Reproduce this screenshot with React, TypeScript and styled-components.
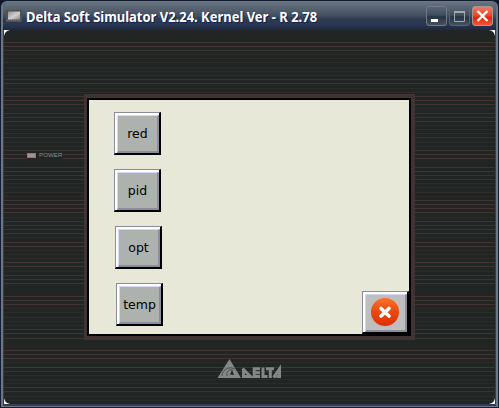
import React from "react";
import styled, { createGlobalStyle } from "styled-components";

const GlobalStyle = createGlobalStyle`
  * { box-sizing: border-box; }
  body { margin: 0; background: #10172b; overflow: hidden; }
`;

const Window = styled.main`
  width: 499px;
  height: 408px;
  display: flex;
  flex-direction: column;
  padding: 1px;
  border-radius: 7px 7px 0 0;
  background: #141d30;
  font-family: "Noto Sans", "Open Sans", sans-serif;
`;

const Frame = styled.div`
  flex: 1;
  display: flex;
  flex-direction: column;
  border: 1px solid #6d7784;
  border-width: 1px 2px 1px 2px;
  border-radius: 6px 6px 0 0;
  background: #2f3d57;
  padding: 0 1px 2px 1px;
  overflow: hidden;
`;

const TitleBar = styled.header`
  height: 28px;
  margin: 0 -1px;
  padding: 0 3px 0 3px;
  display: flex;
  align-items: center;
  background: linear-gradient(#68747f 0, #5b6775 5px, #414e5e 14px, #2e3b53 17px, #293650 23px, #1d2743 28px);
`;

const Title = styled.h1`
  flex: 1;
  margin: 0 0 0 4px;
  padding-top: 2px;
  color: #fff;
  font-size: 13.6px;
  line-height: 20px;
  white-space: nowrap;
  text-shadow: 1px 1px 0 #14204f;
`;

const TitleText = styled.span`
  display: inline-block;
  transform: scaleX(0.954);
  transform-origin: left;
`;

const Controls = styled.div`
  display: flex;
  gap: 2px;
`;

const Control = styled.button<{ $tone?: "close" | "disabled" }>`
  width: 21px;
  height: 20px;
  padding: 0;
  display: grid;
  place-items: center;
  border: 1px solid ${(p) => (p.$tone === "close" ? "#a89791" : p.$tone === "disabled" ? "#586473" : "#6f7a87")};
  border-radius: 3px;
  background: ${(p) =>
    p.$tone === "close"
      ? "linear-gradient(#ed7b65, #e84b2b 45%, #df260c 60%, #f15835)"
      : "linear-gradient(#596675, #414e5d 45%, #263448 55%, #46515b)"};
`;

const Body = styled.section`
  flex: 1;
  display: flex;
  flex-direction: column;
  position: relative;
  background: #212524;
`;

const Grooves = styled.svg`
  position: absolute;
  inset: 0;
  width: 100%;
  height: 100%;
`;

const Corner = styled.svg<{ $side: "tl" | "tr" | "bl" | "br" }>`
  position: absolute;
  width: 6px;
  height: 6px;
  ${(p) => (p.$side[0] === "t" ? "top: 0;" : "bottom: 0;")}
  ${(p) => (p.$side[1] === "l" ? "left: 0;" : "right: 0;")}
  transform: scale(${(p) => (p.$side[1] === "l" ? 1 : -1)}, ${(p) => (p.$side[0] === "t" ? 1 : -1)});
`;

const Middle = styled.div`
  position: relative;
  display: flex;
  padding-top: 64px;
`;

const PowerArea = styled.div`
  width: 80px;
  padding: 57px 0 0 23px;
  display: flex;
  align-items: flex-start;
`;

const Power = styled.div`
  height: 8px;
  display: flex;
  align-items: center;
  gap: 3px;
  color: #8a8e8c;
  font: 6.2px/8px "Liberation Sans", sans-serif;
  background: #212524;
  padding-right: 1px;
`;

const Led = styled.i`
  width: 9px;
  height: 5px;
  background: #ad8f8f;
  border: 1px solid #927777;
`;

const Bezel = styled.div`
  width: 331px;
  height: 246px;
  border: 4px solid #3f3433;
  border-left-width: 3px;
`;

const Screen = styled.div`
  width: 324px;
  height: 238px;
  border: 2px solid #000;
  background: #e7e8d8;
  display: flex;
  justify-content: space-between;
`;

const Menu = styled.nav`
  display: flex;
  flex-direction: column;
  gap: 14px;
  padding: 12px 0 0 25px;
`;

const Key = styled.button<{ $shift?: number; $close?: boolean }>`
  width: 47px;
  height: 43px;
  margin: 0 0 0 ${(p) => p.$shift ?? 0}px;
  padding: 0;
  border: 1px solid #8c8ca0;
  border-right: 2px solid #000;
  border-bottom: 2px solid #000;
  background: #fff;
  display: flex;
  ${(p) => p.$close && "align-self: flex-end;"}
`;

const Face = styled.span<{ $light?: boolean }>`
  flex: 1;
  align-self: stretch;
  margin: 2px 0 0 2px;
  padding: ${(p) => (p.$light ? "0 1px 1px 0" : "0")};
  border: 1px solid #d6d8fa;
  border-right: 2px solid #8c8c9f;
  border-bottom: 2px solid #8c8c9f;
  background: ${(p) => (p.$light ? "#bebebe" : "#adb2ae")};
  color: #000;
  display: flex;
  align-items: center;
  justify-content: center;
  font: 12.5px/16px "DejaVu Sans", sans-serif;

  svg { flex: none; }
`;

const Label = styled.span`
  display: block;
`;

const Brand = styled.footer`
  position: relative;
  display: flex;
  padding: 19px 0 0 213px;
`;

// Engraved lines as [y, colour], with y measured from the top of the window.
const faint = "#2b2b29";
const mid = "#373532";
const warm = "#403533";
const grooves: [number, string][] = [
  [42, warm], [46, warm], [50, mid], [54, faint], [58, faint], [62, "#302e2b"], [67, faint],
  [71, faint], [75, faint], [79, mid], [83, mid], [88, faint], [92, faint], [96, warm],
  [100, warm], [104, warm], [108, faint], [113, mid], [117, mid], [121, mid], [125, faint],
  [129, faint], [133, "#302e2b"], [137, mid], [142, faint], [146, faint], [150, mid],
  [154, warm], [158, warm], [167, mid], [171, warm], [175, mid], [179, mid], [183, faint],
  [187, faint], [192, "#302e2b"], [196, faint], [200, warm], [204, warm], [208, warm],
  [212, warm], [217, faint], [221, mid], [225, mid], [229, mid], [233, mid], [237, faint],
  [242, warm], [246, warm], [250, faint], [254, faint], [258, faint], [262, warm],
  [266, warm], [271, faint], [275, mid], [279, mid], [283, mid], [296, warm], [300, warm],
  [304, warm], [308, faint], [312, faint], [317, "#302e2b"], [321, faint], [325, faint],
  [329, mid], [333, warm], [338, mid], [350, warm], [354, warm], [358, warm], [362, faint],
  [367, warm], [371, mid], [375, faint], [379, faint], [383, faint], [387, warm],
  [391, mid], [396, faint], [400, faint],
];

const keys = [
  { label: "red", shift: 0 },
  { label: "pid", shift: 0 },
  { label: "opt", shift: 1 },
  { label: "temp", shift: 2 },
];

const sides = ["tl", "tr", "bl", "br"] as const;

function DeviceIcon() {
  return (
    <svg width="16" height="12" viewBox="0 0 16 12">
      <defs>
        <linearGradient id="lcd" x2="1" y2="1">
          <stop stopColor="#8d9092" />
          <stop offset=".55" stopColor="#d0d0d0" />
          <stop offset="1" stopColor="#85888a" />
        </linearGradient>
      </defs>
      <path d="M0 0h16v12H0z" fill="#55504d" />
      <path d="M2 1.5h12v8H2z" fill="url(#lcd)" />
      <path d="M1 10.5h14" stroke="#77716b" strokeDasharray="1 1" />
    </svg>
  );
}

export default function App() {
  return (
    <>
      <GlobalStyle />
      <Window>
        <Frame>
          <TitleBar>
            <DeviceIcon />
            <Title><TitleText>Delta Soft Simulator V2.24. Kernel Ver - R 2.78</TitleText></Title>
            <Controls>
              <Control aria-label="Minimize">
                <svg width="19" height="18"><path d="M4 12h7v3H4z" fill="#fff" /></svg>
              </Control>
              <Control $tone="disabled" aria-label="Maximize">
                <svg width="19" height="18">
                  <path d="M4.5 5v9.5h10V5" fill="none" stroke="#a5a9ad" />
                  <path d="M4 4h11v2H4z" fill="#a5a9ad" />
                </svg>
              </Control>
              <Control $tone="close" aria-label="Close">
                <svg width="19" height="18">
                  <path d="M4.5 4l10 10M14.5 4l-10 10" stroke="#fff" strokeWidth="2.3" />
                </svg>
              </Control>
            </Controls>
          </TitleBar>
          <Body>
            <Grooves shapeRendering="crispEdges">
              {grooves.map(([y, color]) => (
                <rect key={y} x="0" y={y - 30} width="100%" height="1" fill={color} />
              ))}
            </Grooves>
            {sides.map((s) => (
              <Corner key={s} $side={s} viewBox="0 0 6 6">
                <path d="M0 0h6L3 1 1 3 0 6z" fill="#fff" />
              </Corner>
            ))}
            <Middle>
              <PowerArea>
                <Power><Led />POWER</Power>
              </PowerArea>
              <Bezel>
                <Screen>
                  <Menu>
                    {keys.map((k) => (
                      <Key key={k.label} $shift={k.shift}>
                        <Face><Label>{k.label}</Label></Face>
                      </Key>
                    ))}
                  </Menu>
                  <Key $close aria-label="Exit">
                    <Face $light>
                      <svg width="28" height="28" viewBox="0 0 28 28">
                        <defs>
                          <linearGradient id="exit" x2="0" y2="1">
                            <stop stopColor="#fb7126" />
                            <stop offset=".5" stopColor="#e9480f" />
                            <stop offset="1" stopColor="#df2d08" />
                          </linearGradient>
                        </defs>
                        <circle cx="14" cy="14" r="14" fill="url(#exit)" />
                        <path d="M10 10.5l8 7.5M18 10.5l-8 7.5" stroke="#fff" strokeWidth="3.6" strokeLinecap="round" />
                      </svg>
                    </Face>
                  </Key>
                </Screen>
              </Bezel>
            </Middle>
            <Brand>
              <svg width="66" height="20" viewBox="0 0 66 20" role="img" aria-label="Delta">
                <path d="M12.5 0L24 19H0.5z" fill="#858787" />
                <path d="M5 17c0-7 8-10 13-7M10 17c-1-5 3-7 6-6" fill="none" stroke="#454949" strokeWidth="0.9" />
                <path d="M15 11l2 5-4-.5z" fill="#202423" />
                <g fill="none" stroke="#858787" strokeWidth="3">
                  <path d="M26.5 19v-8.5M25.5 9.5l8 8H28" />
                  <path d="M43 9.8h-5.8v7.7H43M37 13.7h6M46 8.5v9h4.5M49 9.8h8M53.3 9v10" />
                  <path d="M56.5 18.5l6-8.5v9M57 17.3h5" />
                </g>
              </svg>
            </Brand>
          </Body>
        </Frame>
      </Window>
    </>
  );
}
